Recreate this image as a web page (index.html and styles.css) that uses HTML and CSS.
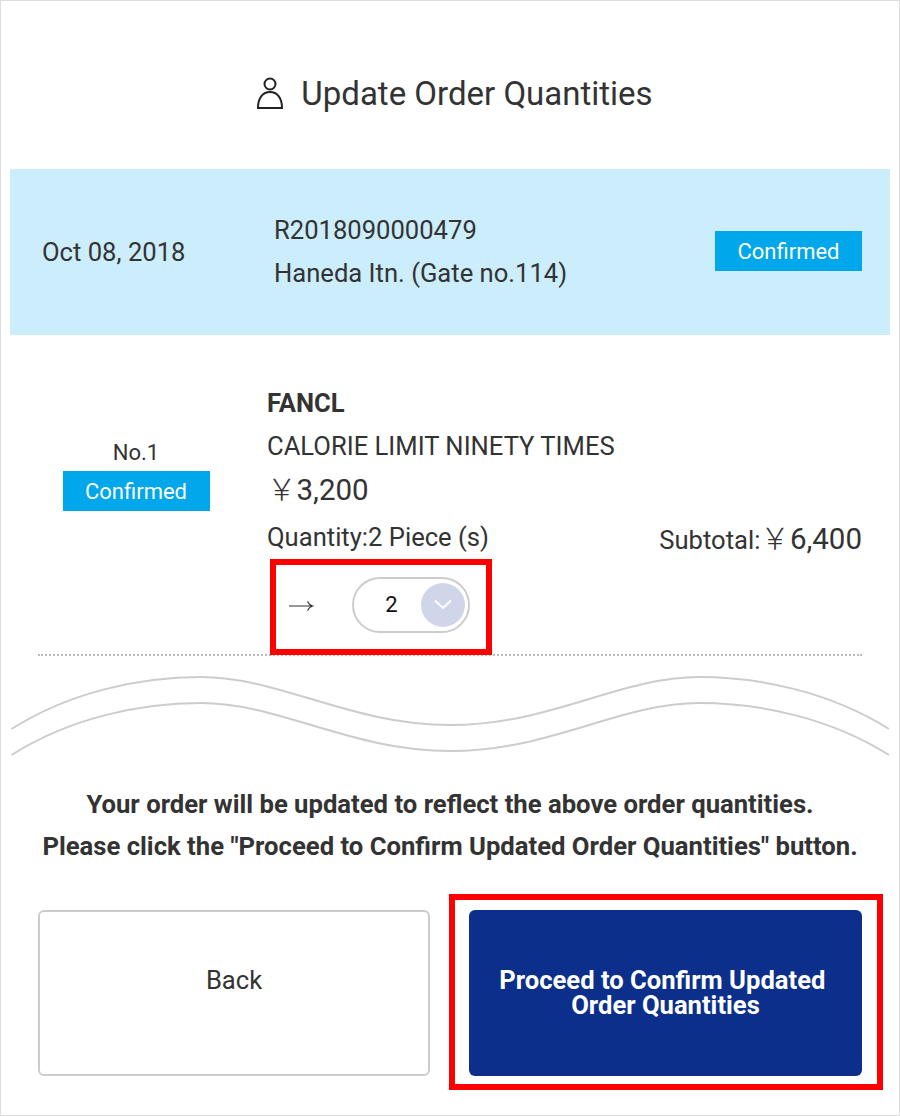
FILE: index.html
```html
<!DOCTYPE html>
<html lang="en">
<head>
    <meta charset="utf-8">
    <title>Update Order Quantities</title>
    <link rel="stylesheet" href="styles.css">
</head>
<body>
<div class="page">
    <h1 class="title">
        <svg class="user-icon" width="26" height="32" viewBox="0 0 26 32" fill="none" stroke="#222" stroke-width="2">
            <circle cx="13" cy="7" r="5.500"/>
            <path d="M1 31C1 20.500 6 15 13 15S25 20.500 25 31Z"/>
        </svg>
        Update Order Quantities
    </h1>

    <div class="order-band">
        <div class="order-date">Oct 08, 2018</div>
        <div class="order-info">
            <p>R2018090000479</p>
            <p>Haneda Itn. (Gate no.114)</p>
        </div>
        <span class="status status-band">Confirmed</span>
    </div>

    <div class="item">
        <div class="item-no">
            <span>No.1</span>
            <span class="status status-item">Confirmed</span>
        </div>
        <div class="item-detail">
            <p class="brand">FANCL</p>
            <p class="name">CALORIE LIMIT NINETY TIMES</p>
            <p class="amount"><span class="yen">￥</span>3,200</p>
            <div class="qty-row">
                <span>Quantity:2 Piece (s)</span>
                <span class="subtotal">Subtotal:<span class="amount"><span class="yen">￥</span>6,400</span></span>
            </div>
            <div class="qty-edit highlight">
                <svg class="arrow" width="26" height="10" viewBox="0 0 26 10" fill="none" stroke="#333" stroke-width="1.200">
                    <path d="M1 5H24M19.500 0.500C20.500 2.500 22 4.300 24.500 5C22 5.700 20.500 7.500 19.500 9.500"/>
                </svg>
                <div class="select-pill">
                    <span class="select-value">2</span>
                    <span class="select-btn">
                        <svg width="20" height="11" viewBox="0 0 20 11" fill="none" stroke="#fff" stroke-width="2">
                            <path d="M2 1.500L10 9L18 1.500"/>
                        </svg>
                    </span>
                </div>
            </div>
        </div>
    </div>

    <svg class="wave" width="880" height="90" viewBox="0 0 880 90" fill="none" stroke="#ccc" stroke-width="2">
        <path d="M1.500 59C60 22 130 7 191 7C270 7 340 55 441 55C540 55 610 7 689 7C750 7 820 22 879 59"/>
        <path d="M1.500 85C60 48 130 33 191 33C270 33 340 81 441 81C540 81 610 33 689 33C750 33 820 48 879 85"/>
    </svg>

    <div class="note">
        <p>Your order will be updated to reflect the above order quantities.</p>
        <p>Please click the "Proceed to Confirm Updated Order Quantities" button.</p>
    </div>

    <div class="buttons">
        <a class="btn btn-back">Back</a>
        <div class="btn-wrap highlight">
            <a class="btn btn-next">Proceed to Confirm Updated&nbsp;<br>Order Quantities</a>
        </div>
    </div>
</div>
</body>
</html>
```

FILE: styles.css
```css
* {
    box-sizing: border-box;
}
body {
    margin: 0;
    font-family: Roboto, "Noto Sans CJK JP", sans-serif;
    color: #333;
}
p {
    margin: 0;
}
.page {
    width: 900px;
    height: 1116px;
    padding: 0 9px;
    border: 1px solid #ddd;
    background-color: #fff;
}
.title {
    display: flex;
    align-items: center;
    justify-content: center;
    gap: 18px;
    height: 168px;
    margin: 0;
    padding: 16px 0 0 10px;
    font-size: 33px;
    font-weight: 400;
    color: #333;
}
.order-band {
    display: flex;
    align-items: center;
    height: 166px;
    padding: 0 28px 0 32px;
    background-color: #cbedfc;
    font-size: 25.600px;
    font-weight: 400;
    color: #333;
}
.order-date {
    width: 232px;
}
.order-info {
    flex: 1;
    line-height: 43px;
}
.status {
    display: flex;
    align-items: center;
    justify-content: center;
    width: 147px;
    height: 40px;
    background-color: #00a7ea;
    color: #fff;
    font-size: 22px;
    font-weight: 400;
}
.status-band {
    margin-top: -2px;
}
.status-item {
    margin-top: 6px;
}
.item {
    display: flex;
    margin: 0 28px;
    height: 321px;
    padding-top: 45px;
    border-bottom: 2px dotted #bbb;
    font-size: 25.600px;
    font-weight: 400;
    color: #333;
}
.item-no {
    display: flex;
    flex-direction: column;
    align-items: center;
    width: 196px;
    margin-right: 33px;
    padding-top: 60px;
    font-size: 22px;
}
.item-detail {
    flex: 1;
    line-height: 44px;
}
.brand {
    margin: 1px 0 -1px;
    font-weight: 700;
}
.amount {
    font-size: 29.500px;
}
.yen {
    font-weight: 300;
}
.qty-row {
    display: flex;
    justify-content: space-between;
    align-items: flex-end;
    line-height: 50px;
}
.subtotal {
    margin-bottom: -3px;
}
.highlight {
    border: 6px solid #f00;
}
.qty-edit {
    display: flex;
    align-items: center;
    width: 222px;
    height: 96px;
    margin: -3px 0 0 3px;
    padding: 0 0 5px 12px;
}
.arrow {
    margin: 2px 38px 0 0;
}
.select-pill {
    display: flex;
    align-items: center;
    justify-content: space-between;
    width: 118px;
    height: 56px;
    border: 2px solid #ccc;
    border-radius: 28px;
}
.select-value {
    flex: 1;
    text-align: center;
    font-size: 22px;
    font-weight: 400;
    color: #111;
    padding-left: 8px;
}
.select-btn {
    display: flex;
    align-items: center;
    justify-content: center;
    width: 44px;
    height: 44px;
    margin-right: 3px;
    border-radius: 50%;
    background-color: #cfd6e9;
}
.wave {
    display: block;
    margin-top: 14px;
}
.note {
    margin-top: 23px;
    text-align: center;
    font-size: 25.660px;
    font-weight: 700;
    line-height: 42px;
    color: #333;
}
.buttons {
    display: flex;
    margin: 27px 0 0 28px;
    gap: 19px;
}
.btn {
    display: flex;
    align-items: center;
    justify-content: center;
    text-align: center;
    border-radius: 6px;
}
.btn-back {
    width: 392px;
    height: 166px;
    margin-top: 16px;
    padding-bottom: 26px;
    border: 2px solid #ccc;
    font-size: 25.600px;
    font-weight: 400;
    color: #333;
}
.btn-wrap {
    width: 434px;
    height: 196px;
    padding: 10px 15px 8px 14px;
}
.btn-next {
    height: 100%;
    background-color: #0b2f8a;
    color: #fff;
    font-size: 25.600px;
    font-weight: 700;
    line-height: 25px;
}
```
